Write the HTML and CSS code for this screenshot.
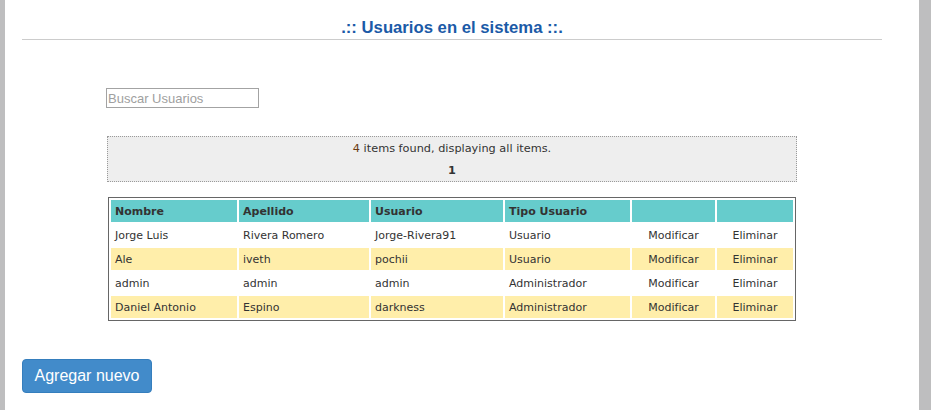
FILE: index.html
```html
<!DOCTYPE html>
<html lang="es">
<head>
<meta charset="utf-8">
<title>Usuarios en el sistema</title>
<link rel="stylesheet" href="styles.css">
</head>
<body>
<div class="page">
  <h2 class="title">.:: Usuarios en el sistema ::.</h2>
  <div class="content">
    <div class="search-row">
      <input class="search" type="text" placeholder="Buscar Usuarios">
    </div>
    <div class="summary">
      <div class="summary-text"><span class="count">4</span> items found, displaying all items.</div>
      <div class="pager">1</div>
    </div>
    <table class="grid">
      <thead>
        <tr>
          <th class="c1">Nombre</th>
          <th class="c2">Apellido</th>
          <th class="c3">Usuario</th>
          <th class="c4">Tipo Usuario</th>
          <th class="c5"></th>
          <th class="c6"></th>
        </tr>
      </thead>
      <tbody>
        <tr class="odd">
          <td>Jorge Luis</td><td>Rivera Romero</td><td>Jorge-Rivera91</td><td>Usuario</td>
          <td class="act">Modificar</td><td class="act">Eliminar</td>
        </tr>
        <tr class="even">
          <td>Ale</td><td>iveth</td><td>pochii</td><td>Usuario</td>
          <td class="act">Modificar</td><td class="act">Eliminar</td>
        </tr>
        <tr class="odd">
          <td>admin</td><td>admin</td><td>admin</td><td>Administrador</td>
          <td class="act">Modificar</td><td class="act">Eliminar</td>
        </tr>
        <tr class="even">
          <td>Daniel Antonio</td><td>Espino</td><td>darkness</td><td>Administrador</td>
          <td class="act">Modificar</td><td class="act">Eliminar</td>
        </tr>
      </tbody>
    </table>
  </div>
  <button class="btn-add" type="button">Agregar nuevo</button>
</div>
</body>
</html>
```
FILE: styles.css
```css
html, body {
  margin: 0;
  padding: 0;
}
body {
  background: #bebebf;
  height: 410px;
  overflow: hidden;
}
.page {
  margin-left: 5px;
  width: 914px;
  min-height: 410px;
  box-sizing: border-box;
  padding: 19px 37px 0 17px;
  background: #ffffff;
}
.title {
  margin: 0;
  font-family: "Liberation Sans", Arial, sans-serif;
  font-size: 16.7px;
  font-weight: bold;
  line-height: 18px;
  color: #1b5aa7;
  text-align: center;
  padding-bottom: 2px;
  border-bottom: 1px solid #cccccc;
}
.content {
  width: 690px;
  margin: 0 auto;
  padding-top: 48px;
}
.search-row {
  margin-left: -1px;
}
.search {
  display: block;
  width: 153px;
  height: 20px;
  box-sizing: border-box;
  border: 1px solid #a3a3a3;
  padding: 0 1px;
  margin: 0;
  font-family: "Liberation Sans", Arial, sans-serif;
  font-size: 13px;
  color: #333;
  outline: none;
}
.search::placeholder {
  color: #a0a0a0;
}
.summary {
  margin-top: 28px;
  height: 46px;
  box-sizing: border-box;
  border: 1px dotted #9a9a9a;
  background: #eeeeee;
  font-family: "DejaVu Sans", Verdana, sans-serif;
  font-size: 11.3px;
  color: #333;
  text-align: center;
  padding-top: 5px;
}
.summary-text {
  line-height: 14px;
}
.count {
  color: #6b3a12;
}
.pager {
  margin-top: 8px;
  font-weight: bold;
  line-height: 14px;
}
.grid {
  margin: 15px auto 0;
  width: 688px;
  border: 1px solid #666666;
  border-collapse: separate;
  border-spacing: 2px;
  font-family: "DejaVu Sans", Verdana, sans-serif;
  font-size: 11px;
  color: #333333;
}
.grid th, .grid td {
  height: 22px;
  padding: 0 4px;
  box-sizing: border-box;
  text-align: left;
  white-space: nowrap;
}
.grid th {
  background: #66cccc;
  font-weight: bold;
}
.grid .c1 { width: 126px; }
.grid .c2 { width: 130px; }
.grid .c3 { width: 132px; }
.grid .c4 { width: 125px; }
.grid .c5 { width: 83px; }
.grid .c6 { width: 76px; }
.grid tr.odd td { background: #ffffff; }
.grid tr.even td { background: #ffeeaa; }
.grid td.act { text-align: center; }
.btn-add {
  display: block;
  margin-top: 38px;
  width: 130px;
  height: 34px;
  padding: 0;
  border: 1px solid #357ebd;
  border-radius: 4px;
  background: #428bca;
  color: #ffffff;
  font-family: "Liberation Sans", Arial, sans-serif;
  font-size: 16px;
  line-height: 32px;
  text-align: center;
  cursor: pointer;
}
```
